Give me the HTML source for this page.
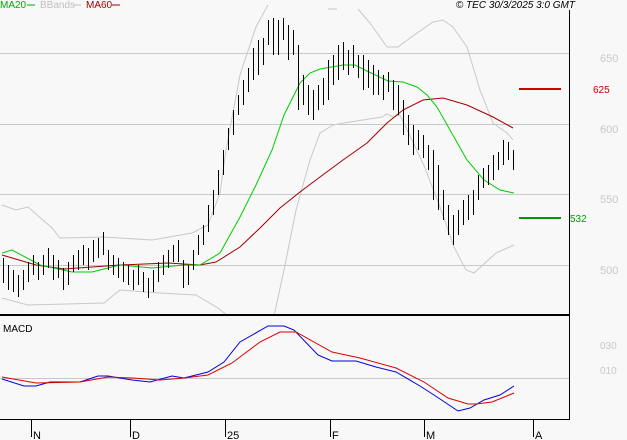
<!DOCTYPE html>
<html><head><meta charset="utf-8"><style>
html,body{margin:0;padding:0;background:#f8f8f8;}
svg{display:block;font-family:"Liberation Sans",sans-serif;}
</style></head><body>
<svg width="627" height="440" viewBox="0 0 627 440" xmlns="http://www.w3.org/2000/svg">
<rect width="627" height="440" fill="#f8f8f8"/>
<g stroke="#c8c8c8" stroke-width="1">
<line x1="0" y1="53.5" x2="569" y2="53.5"/>
<line x1="0" y1="124.5" x2="569" y2="124.5"/>
<line x1="0" y1="194.5" x2="569" y2="194.5"/>
<line x1="0" y1="265.5" x2="569" y2="265.5"/>
<line x1="0" y1="378.5" x2="569" y2="378.5"/>
</g>
<g fill="#c8c8c8" font-size="11">
<text x="600" y="62">650</text><text x="600" y="133">600</text>
<text x="600" y="203">550</text><text x="600" y="274">500</text>
<text x="600" y="349" font-size="10">030</text><text x="600" y="374" font-size="10">010</text>
</g>
<!-- BBands -->
<polyline fill="none" stroke="#c8c8c8" points="2,205 16,210 28,207 52,228 60,238 104,237 152,240 192,233 208,225 220,193 226,150 240,75 256,27 264,12 268,5"/>
<polyline fill="none" stroke="#c8c8c8" points="328,9 337,9"/>
<polyline fill="none" stroke="#c8c8c8" points="358,9 370,23 387,47 398,47 410,38 433,22 443,20 453,27 467,47 480,90 493,123 507,133 513,140"/>
<polyline fill="none" stroke="#c8c8c8" points="2,298 28,305 104,303 120,290 160,293 196,295 218,308 228,316"/>
<polyline fill="none" stroke="#c8c8c8" points="274,316 284,270 296,210 310,160 320,133 333,125 350,122 382,117 387,114 393,117 400,115 412,140 425,168 440,207 454,247 466,270 474,273 496,253 514,245"/>
<!-- MA60 -->
<polyline fill="none" stroke="#a00000" points="2,255 36,265 64,269 120,265 168,263 200,265 216,262 240,247 260,228 280,208 300,192 320,177 343,160 367,143 387,123 403,110 423,100 443,98 467,105 493,117 513,128"/>
<!-- MA20 -->
<polyline fill="none" stroke="#00cc00" points="2,253 12,250 40,265 72,272 92,272 120,265 152,268 184,265 200,265 220,253 240,217 256,185 272,150 284,115 300,83 310,73 320,69 343,65 355,65 367,71 388,81 403,82 417,87 427,95 437,107 450,130 467,160 484,180 500,190 514,193"/>
<path stroke="#000" stroke-width="1" fill="none" d="M3.5 258V283M8.5 265V290M13.5 270V292M18.5 275V297M23.5 270V290M28.5 262V282M33.5 255V275M38.5 262V280M43.5 255V275M48.5 248V268M53.5 255V280M58.5 260V278M63.5 268V290M68.5 262V285M73.5 255V272M78.5 250V270M83.5 245V265M88.5 248V270M93.5 240V262M98.5 238V258M103.5 232V255M108.5 250V270M113.5 255V275M118.5 258V278M123.5 262V282M128.5 265V285M133.5 270V290M138.5 265V285M143.5 272V292M148.5 278V298M153.5 270V292M158.5 262V282M163.5 255V275M168.5 250V268M173.5 245V262M178.5 240V262M183.5 260V288M188.5 265V285M193.5 250V270M198.5 235V255M203.5 225V245M208.5 205V232M213.5 190V215M218.5 170V195M223.5 150V175M228.5 128V150M233.5 110V135M238.5 95V115M243.5 80V105M248.5 68V92M253.5 48V80M258.5 40V75M263.5 38V65M268.5 20V45M273.5 18V55M278.5 20V55M283.5 18V40M288.5 25V60M293.5 30V55M298.5 45V110M303.5 75V105M308.5 85V115M313.5 90V120M318.5 85V110M323.5 78V105M328.5 60V100M333.5 55V85M338.5 45V80M343.5 42V70M348.5 50V75M353.5 45V68M358.5 55V78M363.5 55V90M368.5 60V88M373.5 65V95M378.5 70V95M383.5 75V100M388.5 72V92M393.5 80V110M398.5 85V115M403.5 100V135M408.5 115V145M413.5 125V155M418.5 130V150M423.5 135V158M428.5 145V170M433.5 150V200M438.5 165V210M443.5 190V220M448.5 205V235M453.5 215V245M458.5 210V235M463.5 200V225M468.5 195V220M473.5 190V215M478.5 175V200M483.5 168V188M488.5 165V185M493.5 155V180M498.5 152V170M503.5 140V165M508.5 142V160M513.5 150V170"/>
<!-- MACD -->
<line x1="0" y1="315" x2="569" y2="315" stroke="#000" stroke-width="2"/>
<text x="3" y="332" font-size="10" fill="#000">MACD</text>
<polyline fill="none" stroke="#0000dd" points="2,379 24,386 36,386 50,382 80,382 98,376 108,376 132,380 150,382 172,376 184,378 208,372 224,362 240,342 268,326 284,326 294,330 318,355 332,361 356,361 376,367 396,372 420,386 434,395 458,411 470,408 484,400 500,395 514,386"/>
<polyline fill="none" stroke="#dd0000" points="2,377 36,383 80,382 108,377 132,378 160,380 184,378 208,375 232,363 260,342 280,332 296,332 332,352 360,358 396,368 424,382 448,398 468,404 476,404 492,402 514,393"/>
<!-- axes -->
<line x1="569.5" y1="10" x2="569.5" y2="420" stroke="#000"/>
<line x1="0" y1="419.5" x2="570" y2="419.5" stroke="#000"/>
<g stroke="#000"><line x1="31.5" y1="420" x2="31.5" y2="437"/><line x1="130.5" y1="420" x2="130.5" y2="437"/><line x1="225.5" y1="420" x2="225.5" y2="437"/><line x1="330.5" y1="420" x2="330.5" y2="437"/><line x1="424.5" y1="420" x2="424.5" y2="437"/><line x1="533.5" y1="420" x2="533.5" y2="437"/></g>
<g font-size="11" fill="#000"><text x="33" y="439">N</text><text x="132" y="439">D</text><text x="227" y="439">25</text><text x="332" y="439">F</text><text x="426" y="439">M</text><text x="535" y="439">A</text></g>
<!-- markers -->
<line x1="519" y1="89" x2="561" y2="89" stroke="#cc0000" stroke-width="2"/>
<text x="593" y="93" font-size="10" fill="#cc0000">625</text>
<line x1="519" y1="218" x2="561" y2="218" stroke="#009900" stroke-width="2"/>
<text x="570" y="222" font-size="10" fill="#009900">532</text>
<!-- legend -->
<text x="0" y="8" font-size="10" fill="#00aa00">MA20</text><line x1="27" y1="5" x2="35" y2="5" stroke="#00aa00"/>
<text x="40" y="8" font-size="10" fill="#c0c0c0">BBands</text><line x1="73" y1="5" x2="81" y2="5" stroke="#c0c0c0"/>
<text x="86" y="8" font-size="10" fill="#990000">MA60</text><line x1="112" y1="5" x2="120" y2="5" stroke="#990000"/>
<text x="575" y="8" font-size="10" font-style="italic" fill="#000" text-anchor="end">© TEC 30/3/2025 3:0 GMT</text>
</svg>
</body></html>
